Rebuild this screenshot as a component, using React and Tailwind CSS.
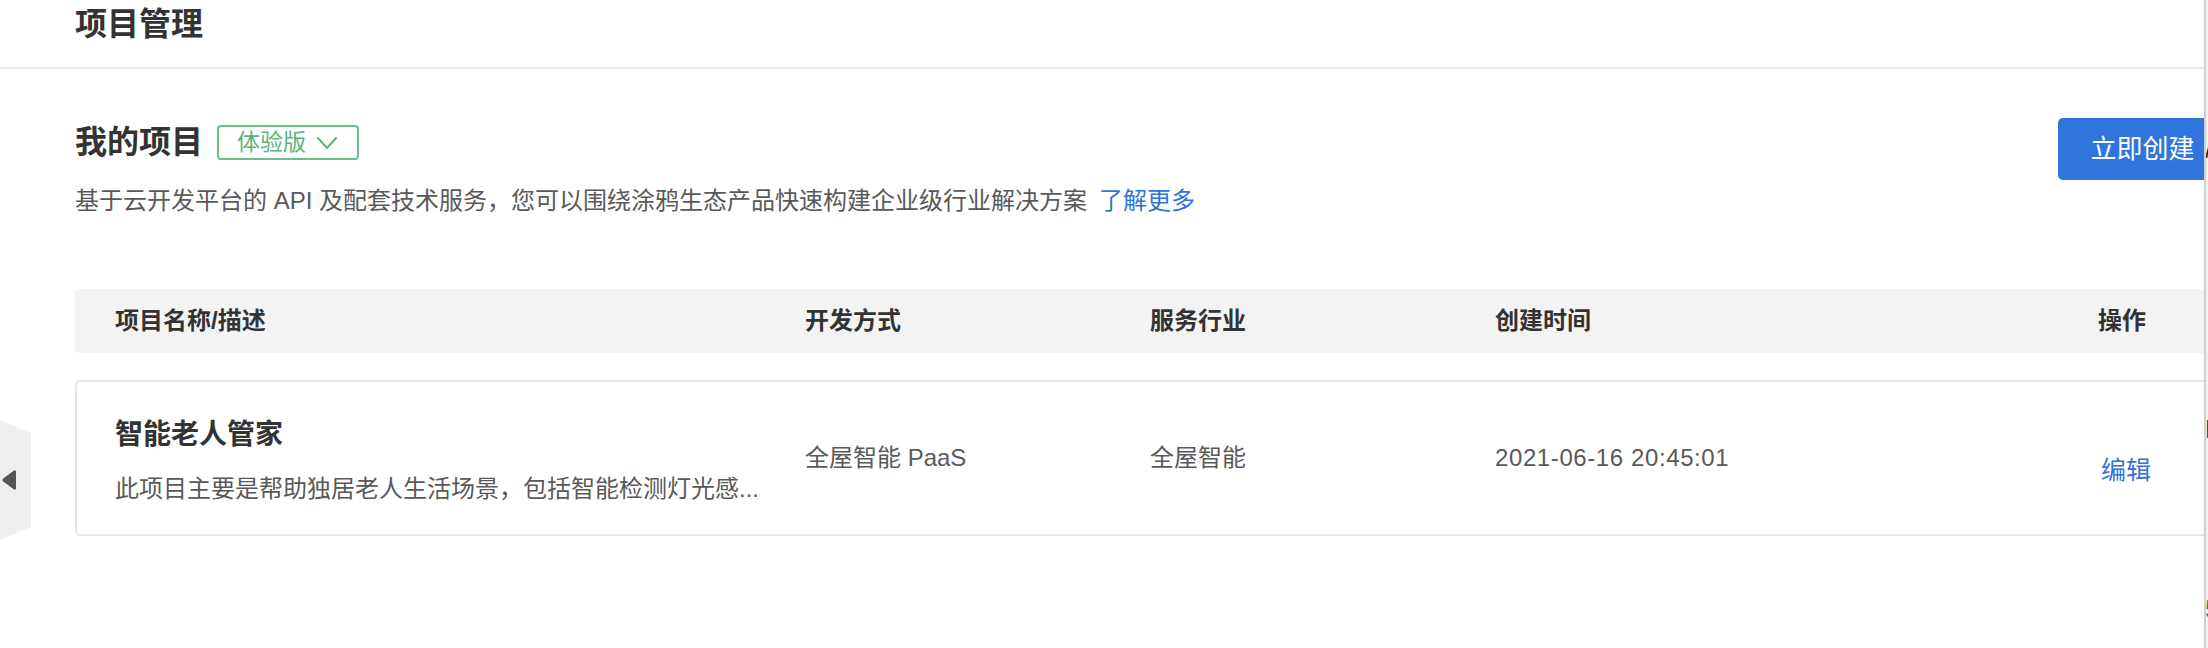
const cols = 'grid grid-cols-[690px_345px_345px_603px_1fr]';

function Chevron() {
  return (
    <svg width="22" height="14" viewBox="0 0 22 14" fill="none" className="ml-[10px]">
      <path d="M1.5 1.5 L11 12 L20.5 1.5" stroke="currentColor" strokeWidth="2" />
    </svg>
  );
}

function SideTab() {
  return (
    <div className="absolute left-0 top-[420px] flex h-[120px] w-[31px] items-center bg-[#efeff0] [clip-path:polygon(0_0,100%_11%,100%_89%,0_100%)]">
      <svg width="16" height="24" viewBox="0 0 16 24" className="ml-[1px]">
        <path d="M13 2.5 Q15 1.5 15 4 L15 20 Q15 22.5 13 21.5 L2 13.3 Q0.8 12 2 10.7 Z" fill="#555" />
      </svg>
    </div>
  );
}

export default function App() {
  return (
    <div className="relative flex h-[648px] w-[2208px] overflow-hidden bg-white font-['Liberation_Sans','Noto_Sans_CJK_SC',sans-serif]">
      <div className="min-w-0 flex-1 overflow-hidden">
        <header className="h-[69px] border-b-2 border-[#e9e9e9] pl-[75px] pt-[4px]">
          <h1 className="text-[32px] font-semibold leading-[40px] text-[#333]">项目管理</h1>
        </header>

        <section className="w-[2227px] pl-[75px]">
          <div className="flex items-start justify-between">
            <div className="mt-[56px]">
              <div className="flex h-[35px] items-center">
                <h2 className="text-[32px] font-semibold leading-[35px] text-[#333]">我的项目</h2>
                <button className="ml-[14px] flex h-[35px] items-center rounded-[4px] border-2 border-[#6cbf8b] pl-[18px] pr-[19px] text-[23px] leading-none text-[#5bb37c]">
                  体验版
                  <Chevron />
                </button>
              </div>
              <p className="mt-[23px] whitespace-nowrap text-[24px] leading-[36px] text-[#595959]">
                基于云开发平台的 API 及配套技术服务，您可以围绕涂鸦生态产品快速构建企业级行业解决方案
                <a className="ml-[12px] text-[#2f72dc]">了解更多</a>
              </p>
            </div>
            <button className="mt-[49px] h-[62px] w-[169px] shrink-0 whitespace-nowrap rounded-[5px] bg-[#2f75db] text-[26px] text-white">
              立即创建
            </button>
          </div>

          <div className={`${cols} mt-[70px] h-[64px] items-center whitespace-nowrap rounded-[4px] bg-[#f3f3f3] pl-[40px] text-[24px] font-semibold text-[#333]`}>
            <div>项目名称/描述</div>
            <div>开发方式</div>
            <div>服务行业</div>
            <div>创建时间</div>
            <div>操作</div>
          </div>

          <div className={`${cols} mt-[27px] h-[156px] items-center whitespace-nowrap rounded-[5px] border-2 border-[#e6e6e6] pl-[38px] text-[24px] leading-[36px] text-[#595959]`}>
            <div className="self-start pt-[35px]">
              <div className="text-[28px] font-semibold text-[#333]">智能老人管家</div>
              <div className="mt-[18px]">此项目主要是帮助独居老人生活场景，包括智能检测灯光感...</div>
            </div>
            <div>全屋智能 PaaS</div>
            <div>全屋智能</div>
            <div className="tracking-[0.6px]">2021-06-16 20:45:01</div>
            <div className="self-start pt-[70px]">
              <a className="ml-[3px] text-[25px] text-[#2f72dc]">编辑</a>
            </div>
          </div>
        </section>
      </div>

      <div className="w-[4px] shrink-0 overflow-hidden border-l-2 border-[#cfcfcf] bg-[#f2f2f2]">
        <div className="ml-[-1px] pt-[134px] text-[26px] leading-[30px] text-[#222]">/</div>
        <div className="ml-[-1px] mt-[250px] text-[26px] leading-[30px] text-[#222]">E</div>
        <div className="ml-[-1px] mt-[150px] text-[26px] leading-[30px] text-[#666]">5</div>
      </div>

      <SideTab />
    </div>
  );
}
